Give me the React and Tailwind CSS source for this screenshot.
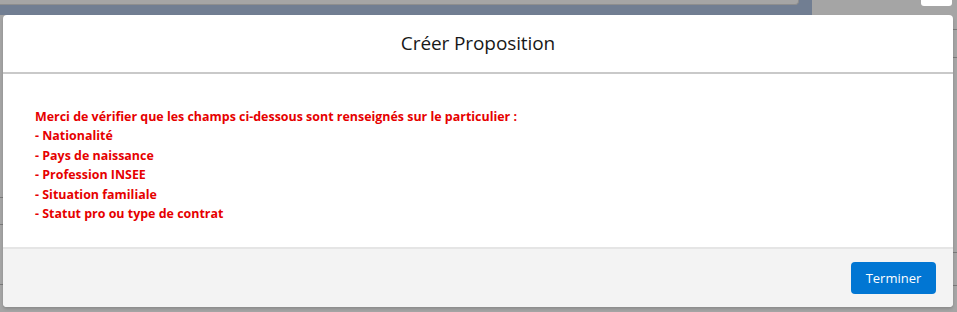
export default function App() {
  const items = [
    "- Nationalité",
    "- Pays de naissance",
    "- Profession INSEE",
    "- Situation familiale",
    "- Statut pro ou type de contrat",
  ];
  return (
    <div className="relative w-[957px] h-[312px] overflow-hidden bg-[#a5a5a5] font-['Open_Sans',sans-serif]">
      {/* background page (under the overlay) */}
      <div className="flex flex-col h-full">
        <div className="flex h-[15px] shrink-0">
          <div className="w-[812px] bg-[#717e92]">
            <div className="w-[799px] h-[5px] bg-[#a5a5a5] rounded-br-[4px] border-b border-r border-[#8e8e8e]"></div>
          </div>
          <div className="flex-1 flex justify-end pr-[5px]">
            <div className="w-[31px] h-[6px] rounded-b-[3px] bg-white"></div>
          </div>
        </div>
        <div className="flex-1 flex justify-between">
          <div className="w-[4px] flex flex-col pt-[182px] gap-[26px]">
            <div className="h-px bg-[#7a7a7a]"></div>
            <div className="h-px bg-[#7a7a7a]"></div>
            <div className="h-px bg-[#7a7a7a] mt-[33px]"></div>
          </div>
          <div className="w-[5px] flex flex-col pt-[14px] gap-[27px]">
            <div className="h-px bg-[#7a7a7a]"></div>
            <div className="h-px bg-[#7a7a7a]"></div>
            <div className="h-px bg-[#7a7a7a] mt-[167px]"></div>
            <div className="h-px bg-[#7a7a7a] mt-[5px]"></div>
          </div>
        </div>
      </div>

      {/* modal overlay */}
      <div className="absolute left-[3px] top-[15px] w-[950px] h-[292px] bg-white rounded-[4px] shadow-[0_2px_3px_rgba(0,0,0,0.16)] flex flex-col overflow-hidden">
        <div className="h-[59px] shrink-0 flex items-center justify-center border-b-2 border-[#c9c9c9]">
          <h2 className="text-[19px] font-normal text-[#181818] tracking-[-0.1px] leading-none">Créer Proposition</h2>
        </div>
        <div className="h-[173px] shrink-0 pl-[32px] pt-[33px] text-[#e60000] font-bold text-[12.45px] leading-[19.4px]">
          <p>Merci de vérifier que les champs ci-dessous sont renseignés sur le particulier :</p>
          {items.map((t) => (
            <p key={t}>{t}</p>
          ))}
        </div>
        <div className="flex-1 bg-[#f3f3f3] border-t-2 border-[#e5e5e5] flex justify-end items-start pt-[13px] pr-[17px]">
          <button className="w-[85px] h-[32px] rounded-[4px] bg-[#0176d3] text-white text-[13px] leading-none">
            Terminer
          </button>
        </div>
      </div>
    </div>
  );
}
